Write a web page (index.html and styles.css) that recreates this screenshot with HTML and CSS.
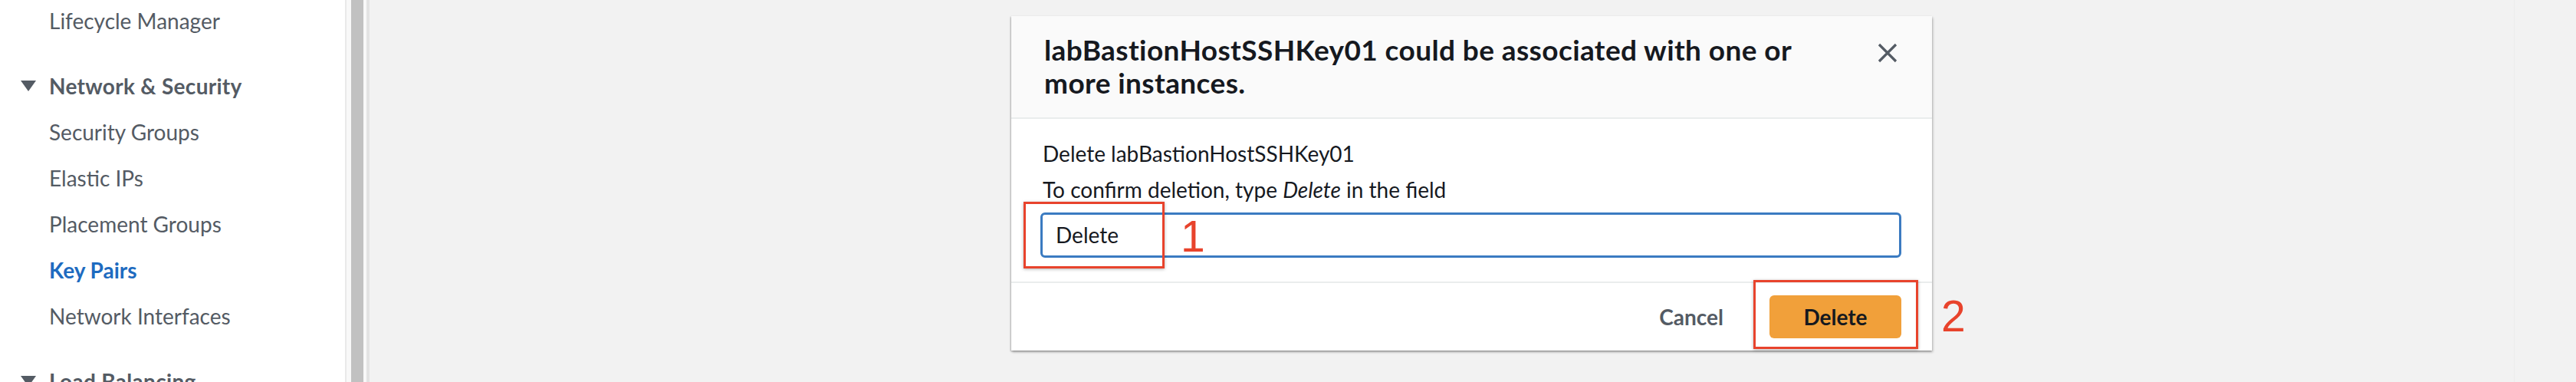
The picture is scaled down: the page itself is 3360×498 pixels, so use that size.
FILE: index.html
```html
<!DOCTYPE html>
<html lang="en">
<head>
<meta charset="utf-8">
<title>Delete key pair</title>
<link rel="stylesheet" href="styles.css">
</head>
<body>
<div class="page">
  <nav class="sidebar">
    <ul class="nav-list">
      <li class="nav-item">Lifecycle Manager</li>
    </ul>
    <div class="nav-section">
      <div class="nav-heading"><span class="caret"></span>Network &amp; Security</div>
      <ul class="nav-list">
        <li class="nav-item">Security Groups</li>
        <li class="nav-item">Elastic IPs</li>
        <li class="nav-item">Placement Groups</li>
        <li class="nav-item active">Key Pairs</li>
        <li class="nav-item">Network Interfaces</li>
      </ul>
    </div>
    <div class="nav-section">
      <div class="nav-heading"><span class="caret"></span>Load Balancing</div>
    </div>
  </nav>
  <div class="nav-scroll"><div class="thumb"></div></div>
  <main class="main">
    <div class="modal">
      <header class="modal-header">
        <h2 class="modal-title">labBastionHostSSHKey01 could be associated with one or more instances.</h2>
        <button class="close" aria-label="Close">
          <svg width="26" height="26" viewBox="0 0 26 26"><path d="M2 2 L24 24 M24 2 L2 24" stroke="#545b64" stroke-width="3.2" fill="none"/></svg>
        </button>
      </header>
      <section class="modal-body">
        <p class="line">Delete labBastionHostSSHKey01</p>
        <p class="line">To confirm deletion, type <em>Delete</em> in the field</p>
        <div class="input">Delete</div>
      </section>
      <footer class="modal-footer">
        <button class="btn-link">Cancel</button>
        <button class="btn-primary">Delete</button>
      </footer>
      <div class="mark mark-1"></div>
      <div class="num num-1">1</div>
      <div class="mark mark-2"></div>
      <div class="num num-2">2</div>
    </div>
    <div class="gutter"></div>
  </main>
</div>
</body>
</html>
```

FILE: styles.css
```css
* { box-sizing: border-box; }
html, body { margin: 0; padding: 0; }
body {
  width: 3360px;
  height: 498px;
  overflow: hidden;
  background: #f2f2f2;
  font-family: "Lato", "Open Sans", sans-serif;
  color: #16191f;
}
.page {
  display: flex;
  height: 498px;
}
.sidebar {
  flex: none;
  width: 452px;
  background: #fff;
  border-right: 2px solid #e9e9e9;
  margin-top: -3px;
}
.nav-list { list-style: none; margin: 0; padding: 0; }
.nav-item {
  font-size: 28px;
  line-height: 60px;
  height: 60px;
  padding-left: 64px;
  color: #545b64;
}
.nav-item.active { color: #1e6bc0; font-weight: 700; }
.nav-section { margin-top: 25px; }
.nav-heading {
  display: flex;
  align-items: center;
  font-size: 28px;
  line-height: 60px;
  height: 60px;
  font-weight: 700;
  color: #545b64;
  padding-left: 27px;
  letter-spacing: 0.3px;
}
.caret {
  width: 0; height: 0;
  border-left: 10px solid transparent;
  border-right: 10px solid transparent;
  border-top: 14px solid #545b64;
  margin-right: 17px;
}
.nav-scroll {
  flex: none;
  width: 30px;
  background: #f8f8f8;
  display: flex;
  padding-left: 6px;
  border-right: 4px solid #e3e3e3;
}
.thumb { width: 16px; background: #c1c1c1; }
.main {
  flex: 1;
  display: flex;
  align-items: flex-start;
  padding-left: 837px;
}
.modal {
  position: relative;
  margin-top: 21px;
  width: 1201px;
  background: #fff;
  box-shadow: -1px 1px 2px rgba(0, 0, 0, 0.25), 1px 2px 3px rgba(0, 0, 0, 0.28);
}
.modal-header {
  display: flex;
  align-items: flex-start;
  background: #fafafa;
  border-bottom: 2px solid #eaeded;
  height: 134px;
  padding: 22px 45px 0 43px;
}
.modal-title {
  margin: 0;
  width: 1010px;
  font-size: 37px;
  line-height: 43px;
  letter-spacing: 0.4px;
  font-weight: 700;
  color: #16191f;
}
.close {
  margin-left: auto;
  margin-top: 13px;
  padding: 0;
  border: 0;
  background: none;
  width: 26px;
  height: 26px;
  display: block;
}
.close svg { display: block; }
.modal-body {
  padding: 22px 40px 31px 41px;
}
.line {
  margin: 0;
  font-size: 28px;
  line-height: 47px;
  color: #16191f;
}
.line em { font-style: italic; }
.input {
  margin-top: 6px;
  margin-left: -3px;
  height: 59px;
  border: 3px solid #3b7bc1;
  border-radius: 6px;
  font-size: 28px;
  line-height: 53px;
  padding-left: 17px;
  color: #16191f;
}
.modal-footer {
  display: flex;
  align-items: center;
  justify-content: flex-end;
  border-top: 2px solid #eaeded;
  height: 90px;
  padding-right: 40px;
}
.btn-link {
  border: 0;
  background: none;
  font-family: inherit;
  font-size: 28px;
  font-weight: 700;
  color: #545b64;
  padding: 0;
  margin-right: 60px;
}
.btn-primary {
  border: 0;
  width: 172px;
  height: 56px;
  border-radius: 6px;
  background: #f1a03a;
  font-family: inherit;
  font-size: 28px;
  font-weight: 700;
  color: #16191f;
}
.mark {
  position: absolute;
  border: 3px solid #e8432c;
  box-shadow: 0 1px 4px rgba(0, 0, 0, 0.3);
}
.mark-1 { left: 16px; top: 242px; width: 184px; height: 87px; }
.mark-2 { left: 968px; top: 344px; width: 215px; height: 90px; }
.num {
  position: absolute;
  font-family: "Liberation Sans", Arial, sans-serif;
  font-size: 57px;
  line-height: 57px;
  color: #e8432c;
}
.num-1 { left: 221px; top: 259px; }
.num-2 { left: 1213px; top: 363px; }
.gutter {
  margin-left: auto;
  width: 81px;
  height: 498px;
  border-left: 1px solid #ececec;
  flex: none;
}
```
